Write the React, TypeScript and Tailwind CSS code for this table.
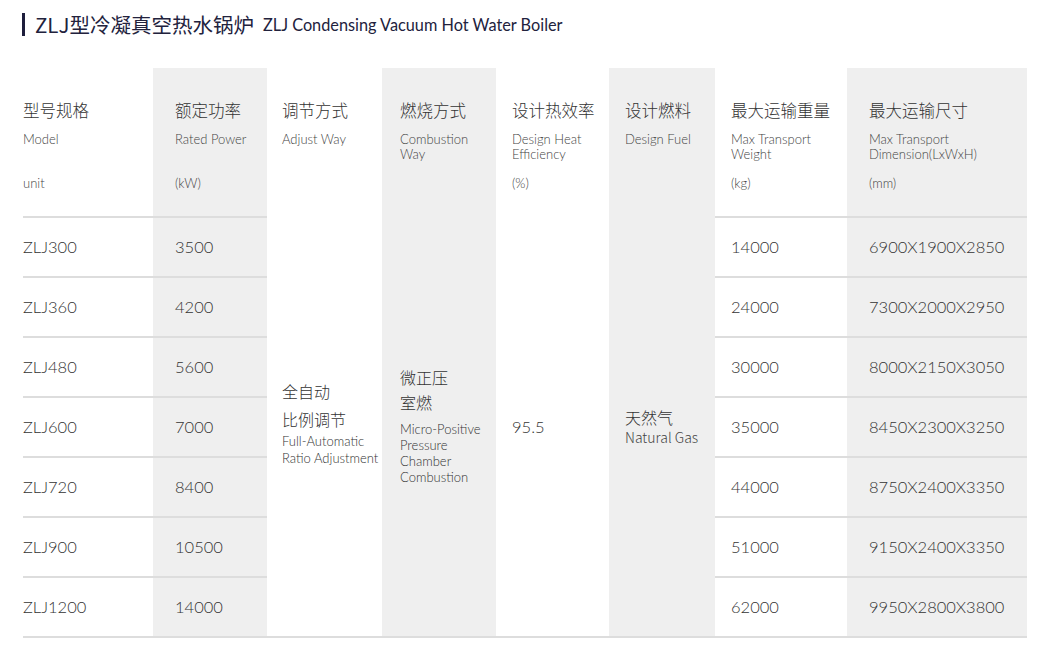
const latin = "font-['Lato','Noto_Sans_CJK_SC',sans-serif]";
const cjk = "font-['Noto_Sans_CJK_SC',sans-serif] font-light";

const rows = [
  { model: 'ZLJ300', power: '3500', weight: '14000', size: '6900X1900X2850' },
  { model: 'ZLJ360', power: '4200', weight: '24000', size: '7300X2000X2950' },
  { model: 'ZLJ480', power: '5600', weight: '30000', size: '8000X2150X3050' },
  { model: 'ZLJ600', power: '7000', weight: '35000', size: '8450X2300X3250' },
  { model: 'ZLJ720', power: '8400', weight: '44000', size: '8750X2400X3350' },
  { model: 'ZLJ900', power: '10500', weight: '51000', size: '9150X2400X3350' },
  { model: 'ZLJ1200', power: '14000', weight: '62000', size: '9950X2800X3800' },
];

function HeaderText({ zh, en, unit }: { zh: string; en: string[]; unit?: string }) {
  return (
    <div className="pt-[30px]">
      <div className={`text-[16.5px] leading-[24px] text-[#333] whitespace-nowrap ${cjk}`}>{zh}</div>
      <div className="mt-[10px] h-[30px] text-[13px] leading-[15px] font-light text-[#444]">
        {en.map((l) => (
          <div key={l} className="whitespace-nowrap">{l}</div>
        ))}
      </div>
      {unit && <div className="mt-[14px] text-[13px] leading-[15px] font-light text-[#444]">{unit}</div>}
    </div>
  );
}

// two-column side block (model/power and weight/size)
function SideBlock({
  widths,
  pads,
  greys,
  head,
  cells,
}: {
  widths: string[];
  pads: string[];
  greys: boolean[];
  head: { zh: string; en: string[]; unit: string }[];
  cells: string[][];
}) {
  return (
    <div className="flex flex-col">
      <div className="flex">
        {head.map((h, i) => (
          <div key={h.zh} className={`${widths[i]} ${pads[i]} h-[150px] border-b-2 border-[#dddddd] ${greys[i] ? 'bg-[#efefef]' : 'bg-white'}`}>
            <HeaderText zh={h.zh} en={h.en} unit={h.unit} />
          </div>
        ))}
      </div>
      {cells.map((r, ri) => (
        <div key={ri} className="flex">
          {r.map((c, i) => (
            <div
              key={i}
              className={`${widths[i]} ${pads[i]} h-[60px] border-b-2 border-[#dddddd] flex items-center text-[16.5px] font-light text-[#333] ${greys[i] ? 'bg-[#efefef]' : 'bg-white'}`}
            >
              {c}
            </div>
          ))}
        </div>
      ))}
    </div>
  );
}

function MergedCol({
  className,
  zh,
  en,
  unit,
  children,
}: {
  className: string;
  zh: string;
  en: string[];
  unit?: string;
  children: React.ReactNode;
}) {
  return (
    <div className={`${className} flex flex-col border-b-2 border-[#dddddd]`}>
      <div className="h-[150px]">
        <HeaderText zh={zh} en={en} unit={unit} />
      </div>
      <div className="flex flex-1 items-center">{children}</div>
    </div>
  );
}

export default function App() {
  return (
    <div className={`w-[1043px] h-[652px] bg-white ${latin}`}>
      <div className="flex items-center pl-[22px] pt-[13px]">
        <div className="mr-[10px] w-[3px] h-[23px] bg-[#1e1e3c]" />
        <span className="text-[20.5px] leading-[23px] text-[#22223d] font-['Noto_Sans_CJK_SC',sans-serif]">
          ZLJ型冷凝真空热水锅炉
        </span>
        <span className="ml-[9px] text-[16.3px] leading-[23px] text-[#22223d]">ZLJ Condensing Vacuum Hot Water Boiler</span>
      </div>

      <div className="ml-[23px] mt-[32px] flex">
        <SideBlock
          widths={['w-[130px]', 'w-[114px]']}
          pads={['pl-0', 'pl-[22px]']}
          greys={[false, true]}
          head={[
            { zh: '型号规格', en: ['Model'], unit: 'unit' },
            { zh: '额定功率', en: ['Rated Power'], unit: '(kW)' },
          ]}
          cells={rows.map((r) => [r.model, r.power])}
        />

        <MergedCol className="w-[115px] pl-[15px] bg-white" zh="调节方式" en={['Adjust Way']}>
          <div className="pb-[10px]">
            <div className={`text-[16px] leading-[28px] text-[#333] ${cjk}`}>全自动</div>
            <div className={`text-[16px] leading-[28px] text-[#333] ${cjk}`}>比例调节</div>
            <div className="text-[13px] leading-[17px] font-light text-[#333] whitespace-nowrap">Full-Automatic</div>
            <div className="text-[13px] leading-[17px] font-light text-[#333] whitespace-nowrap">Ratio Adjustment</div>
          </div>
        </MergedCol>

        <MergedCol className="w-[114px] pl-[18px] bg-[#efefef]" zh="燃烧方式" en={['Combustion', 'Way']}>
          <div className="pb-[4px]">
            <div className={`mb-[6px] text-[16px] leading-[25px] text-[#333] ${cjk}`}>
              <div>微正压</div>
              <div>室燃</div>
            </div>
            <div className="text-[13px] leading-[16px] font-light text-[#333]">Micro-Positive</div>
            <div className="text-[13px] leading-[16px] font-light text-[#333]">Pressure</div>
            <div className="text-[13px] leading-[16px] font-light text-[#333]">Chamber</div>
            <div className="text-[13px] leading-[16px] font-light text-[#333]">Combustion</div>
          </div>
        </MergedCol>

        <MergedCol className="w-[113px] pl-[16px] bg-white" zh="设计热效率" en={['Design Heat', 'Efficiency']} unit="(%)">
          <div className="text-[16.5px] font-light text-[#333]">95.5</div>
        </MergedCol>

        <MergedCol className="w-[106px] pl-[16px] bg-[#efefef]" zh="设计燃料" en={['Design Fuel']}>
          <div>
            <div className={`text-[16px] leading-[20px] text-[#333] ${cjk}`}>天然气</div>
            <div className={`text-[14px] leading-[20px] text-[#444] whitespace-nowrap ${cjk}`}>Natural Gas</div>
          </div>
        </MergedCol>

        <SideBlock
          widths={['w-[132px]', 'w-[180px]']}
          pads={['pl-[16px]', 'pl-[22px]']}
          greys={[false, true]}
          head={[
            { zh: '最大运输重量', en: ['Max Transport', 'Weight'], unit: '(kg)' },
            { zh: '最大运输尺寸', en: ['Max Transport', 'Dimension(LxWxH)'], unit: '(mm)' },
          ]}
          cells={rows.map((r) => [r.weight, r.size])}
        />
      </div>
    </div>
  );
}
